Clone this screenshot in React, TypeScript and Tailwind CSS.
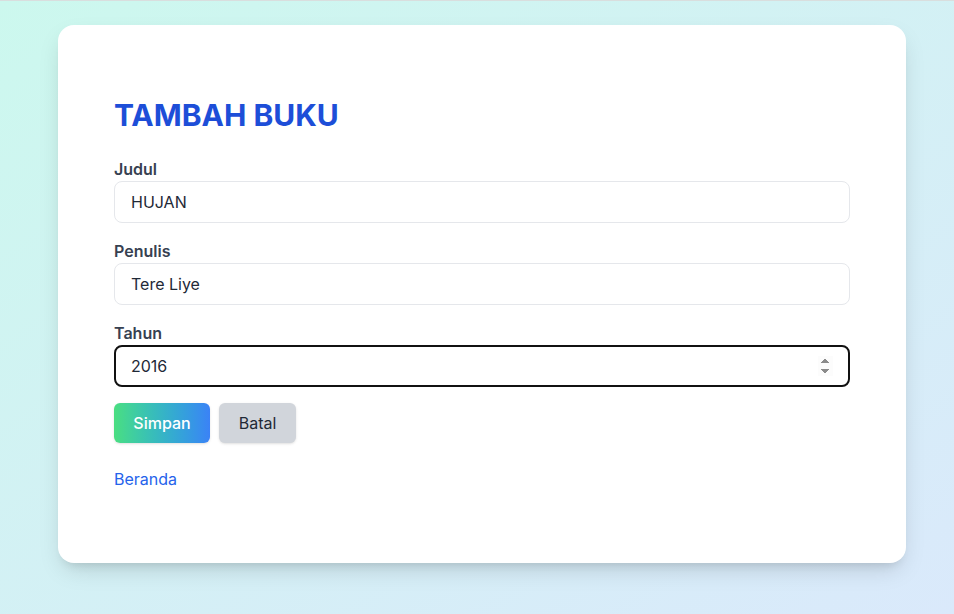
export default function App() {
  return (
    <div
      className="min-h-screen w-full border-t border-[#d9dede] bg-gradient-to-br from-[#ccf8ee] to-[#dae9fb] pt-[24px] pb-[51px]"
      style={{ fontFamily: 'Inter, "Noto Sans", sans-serif' }}
    >
      <div className="ml-[58px] w-[848px] rounded-2xl bg-white px-14 py-[72px] shadow-[0_10px_25px_-5px_rgba(0,0,0,0.15),0_8px_10px_-6px_rgba(0,0,0,0.1)]">
        <h1 className="mb-6 text-[30px] leading-9 font-bold text-[#1d4ed8]">TAMBAH BUKU</h1>

        {/* Judul */}
        <div className="mb-4">
          <label className="block text-base leading-6 font-semibold text-[#374151]">Judul</label>
          <input
            type="text"
            defaultValue="HUJAN"
            className="block h-[42px] w-full rounded-lg border border-[#e5e7eb] px-4 text-base text-[#1f2937] outline-none"
          />
        </div>

        {/* Penulis */}
        <div className="mb-4">
          <label className="block text-base leading-6 font-semibold text-[#374151]">Penulis</label>
          <input
            type="text"
            defaultValue="Tere Liye"
            className="block h-[42px] w-full rounded-lg border border-[#e5e7eb] px-4 text-base text-[#1f2937] outline-none"
          />
        </div>

        {/* Tahun */}
        <div className="mb-4">
          <label className="block text-base leading-6 font-semibold text-[#374151]">Tahun</label>
          <input
            type="number"
            defaultValue="2016"
            autoFocus
            className="block h-[42px] w-full rounded-lg border-2 border-[#111111] px-[15px] text-base text-[#1f2937] caret-black outline-none"
          />
        </div>

        <div className="flex gap-[9px]">
          <button className="h-10 w-[96px] rounded-md bg-gradient-to-r from-[#4ade80] to-[#3b82f6] text-base font-medium text-white shadow-sm">
            Simpan
          </button>
          <button className="h-10 w-[77px] rounded-md bg-[#d1d5db] text-base text-[#1f2937] shadow-sm">
            Batal
          </button>
        </div>

        <a href="#" className="mt-6 block w-fit text-base leading-6 text-[#2563eb]">
          Beranda
        </a>
      </div>
    </div>
  )
}
